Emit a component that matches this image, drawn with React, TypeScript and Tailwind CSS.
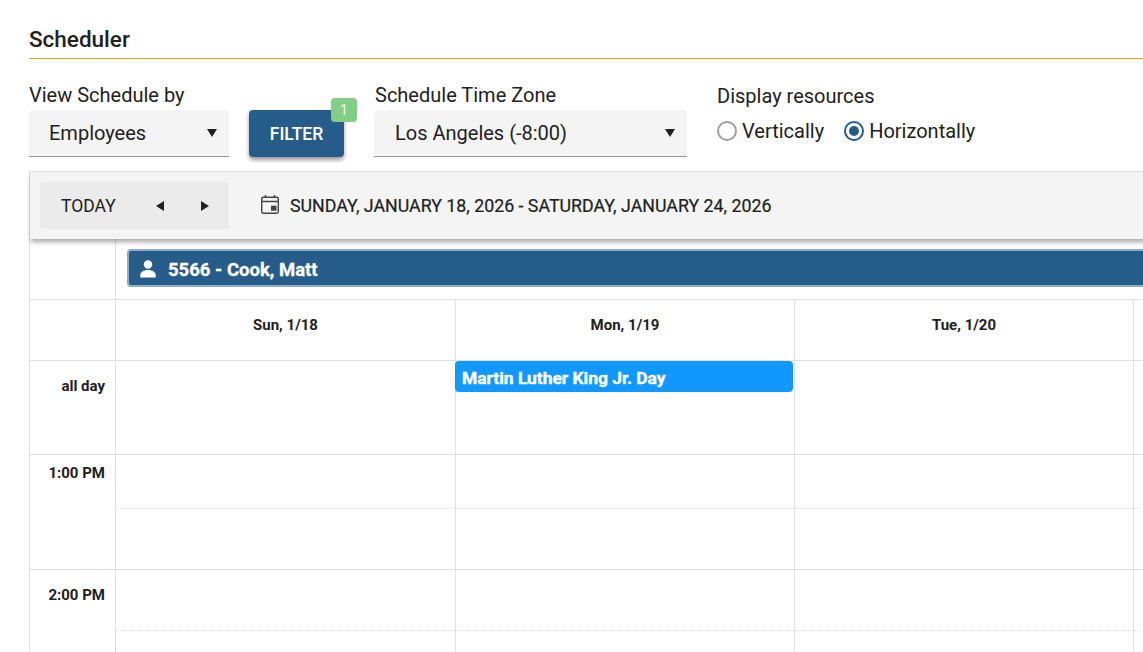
const days = ["Sun, 1/18", "Mon, 1/19", "Tue, 1/20", ""];
const columns = "grid grid-cols-[86px_340px_339px_339px_339px]";

function Caret({ className }: { className?: string }) {
  return (
    <svg viewBox="0 0 10 8" preserveAspectRatio="none" className={className} fill="currentColor">
      <path d="M0 0h10L5 8z" />
    </svg>
  );
}

function Arrow({ left }: { left?: boolean }) {
  return (
    <svg viewBox="0 0 8 10" className="w-[8px] h-[10px]" fill="currentColor">
      <path d={left ? "M8 0v10L0 5z" : "M0 0v10L8 5z"} />
    </svg>
  );
}

function SelectBox({ value, width, inset }: { value: string; width: string; inset: string }) {
  return (
    <div
      className={`${width} ${inset} h-[47px] flex items-center justify-between pr-[12px] bg-[#f4f4f4] rounded-t-[4px] border-b border-[#949494] text-[20px] text-[#212121]`}
    >
      <span>{value}</span>
      <Caret className="w-[10px] h-[8px] text-[#212121]" />
    </div>
  );
}

function Radio({ label, checked }: { label: string; checked?: boolean }) {
  return (
    <div className="flex items-center gap-[5px]">
      <span
        className={`w-5 h-5 rounded-full border-2 flex items-center justify-center bg-white ${
          checked ? "border-[#255c8a]" : "border-[#9e9e9e]"
        }`}
      >
        {checked && <span className="w-[10px] h-[10px] rounded-full bg-[#255c8a]" />}
      </span>
      <span className="text-[20px] text-[#212121]">{label}</span>
    </div>
  );
}

function TimeRow({ label, height, half, top }: { label: string; height: string; half: string; top: string }) {
  return (
    <div className={`${columns} ${height} border-b border-[#e0e0e0]`}>
      <div className={`${top} border-r border-[#e0e0e0] pr-[10px] text-right text-[15px] font-bold text-[#212121]`}>
        {label}
      </div>
      {days.map((day, i) => (
        <div key={i} className="border-r border-[#e0e0e0]">
          <div className={`${half} border-b border-dotted border-[#e0e0e0]`} />
        </div>
      ))}
    </div>
  );
}

export default function App() {
  return (
    <div className="w-[1143px] h-[652px] overflow-hidden bg-white pl-[29px] font-['Roboto',sans-serif]">
      <div className="w-[1200px]">
        {/* Title */}
        <div className="h-[59px] pt-[24px] border-b border-[#f59e0b]">
          <h1 className="text-[22.5px] leading-[30px] font-medium text-[#212121]">Scheduler</h1>
        </div>

        {/* Filters */}
        <div className="flex h-[112px] pt-[22px]">
          <div className="w-[220px] flex flex-col">
            <label className="text-[20px] leading-[29px] text-[#212121]">View Schedule by</label>
            <SelectBox value="Employees" width="w-[200px]" inset="pl-5" />
          </div>
          <div className="relative w-[95px] h-[47px] mt-[29px] mr-[30px] pt-px rounded-[4px] bg-[#255c8a] shadow-[0_3px_4px_rgba(0,0,0,0.4)] flex items-center justify-center text-[17.5px] font-medium text-white">
            FILTER
            <span className="absolute -top-[12px] -right-[13px] w-[26px] h-[24px] rounded-[4px] bg-[#83cd87] flex items-center justify-center text-[14px] font-normal text-white">
              1
            </span>
          </div>
          <div className="w-[343px] flex flex-col">
            <label className="pl-px text-[20px] leading-[29px] text-[#212121]">Schedule Time Zone</label>
            <SelectBox value="Los Angeles (-8:00)" width="w-[313px]" inset="pl-[21px]" />
          </div>
          <div className="flex flex-col">
            <label className="text-[20px] leading-[28px] mt-[1px] text-[#212121]">Display resources</label>
            <div className="flex items-center gap-5 mt-[6px]">
              <Radio label="Vertically" />
              <Radio label="Horizontally" checked />
            </div>
          </div>
        </div>

        {/* Calendar */}
        <div className="border-l border-[#e0e0e0]">
          <div className="relative z-10 h-[68px] flex items-center pl-[10px] bg-[#f4f4f4] border-t border-[#e0e0e0] shadow-[0_4px_5px_-1px_rgba(0,0,0,0.35)]">
            <div className="w-[189px] h-[47px] pt-px flex items-center rounded-[4px] bg-[#ebebeb] text-[#212121]">
              <span className="ml-[21px] text-[17.5px]">TODAY</span>
              <span className="ml-[40px]">
                <Arrow left />
              </span>
              <span className="ml-[37px]">
                <Arrow />
              </span>
            </div>
            <svg viewBox="0 0 18 19" className="ml-[32px] -mt-[2px] w-[18px] h-[19px] text-[#444444]" fill="none" stroke="currentColor" strokeWidth="1.4">
              <rect x="0.7" y="2.2" width="16.6" height="16" rx="1.6" />
              <path d="M1 6.5h16M4.5 0v3M13.5 0v3" />
              <rect x="10" y="10.7" width="5.5" height="5" fill="currentColor" stroke="none" />
            </svg>
            <span className="ml-[11px] pt-px text-[17.8px] text-[#212121] [-webkit-text-stroke:0.2px_#212121]">
              SUNDAY, JANUARY 18, 2026 - SATURDAY, JANUARY 24, 2026
            </span>
          </div>

          {/* Resource row */}
          <div className="flex h-[61px] border-b border-[#e0e0e0]">
            <div className="w-[86px] shrink-0 border-r border-[#e0e0e0]" />
            <div className="flex-1 pl-[11px] pt-[10px]">
              <div className="h-[38px] flex items-center rounded-l-[4px] bg-[#255c8a] border-2 border-r-0 border-[#8fadc5] text-white">
                <svg viewBox="0 0 16 18" className="ml-[11px] mt-[2px] w-[16px] h-[18px]" fill="currentColor">
                  <circle cx="8" cy="4.5" r="4.2" />
                  <path d="M0.3 17.5v-2.5C0.3 12.2 3.5 10 8 10s7.7 2.2 7.7 5v2.5z" />
                </svg>
                <span className="ml-[12px] mt-[5px] text-[18.5px] font-bold [-webkit-text-stroke:0.3px_white]">5566 - Cook, Matt</span>
              </div>
            </div>
          </div>

          {/* Day headers */}
          <div className={`${columns} h-[61px] border-b border-[#e0e0e0]`}>
            <div className="border-r border-[#e0e0e0]" />
            {days.map((day, i) => (
              <div key={i} className="border-r border-[#e0e0e0] pt-[14px] text-center text-[15px] font-bold text-[#212121]">
                {day}
              </div>
            ))}
          </div>

          {/* All day */}
          <div className={`${columns} h-[94px] border-b border-[#e0e0e0]`}>
            <div className="border-r border-[#e0e0e0] pr-[10px] pt-[14px] text-right text-[15px] font-bold text-[#212121]">
              all day
            </div>
            {days.map((day, i) => (
              <div key={i} className="relative border-r border-[#e0e0e0]">
                {i === 1 && (
                  <div className="absolute left-[-1px] right-[1px] top-0 h-[31px] pl-[7px] pt-[4px] flex items-center rounded-[4px] bg-[#1098ff] text-[17.4px] font-bold text-white [-webkit-text-stroke:0.4px_white]">
                    Martin Luther King Jr. Day
                  </div>
                )}
              </div>
            ))}
          </div>

          <TimeRow label="1:00 PM" height="h-[115px]" half="h-[54px]" top="pt-[7px]" />
          <TimeRow label="2:00 PM" height="h-[122px]" half="h-[61px]" top="pt-[14px]" />
        </div>
      </div>
    </div>
  );
}
